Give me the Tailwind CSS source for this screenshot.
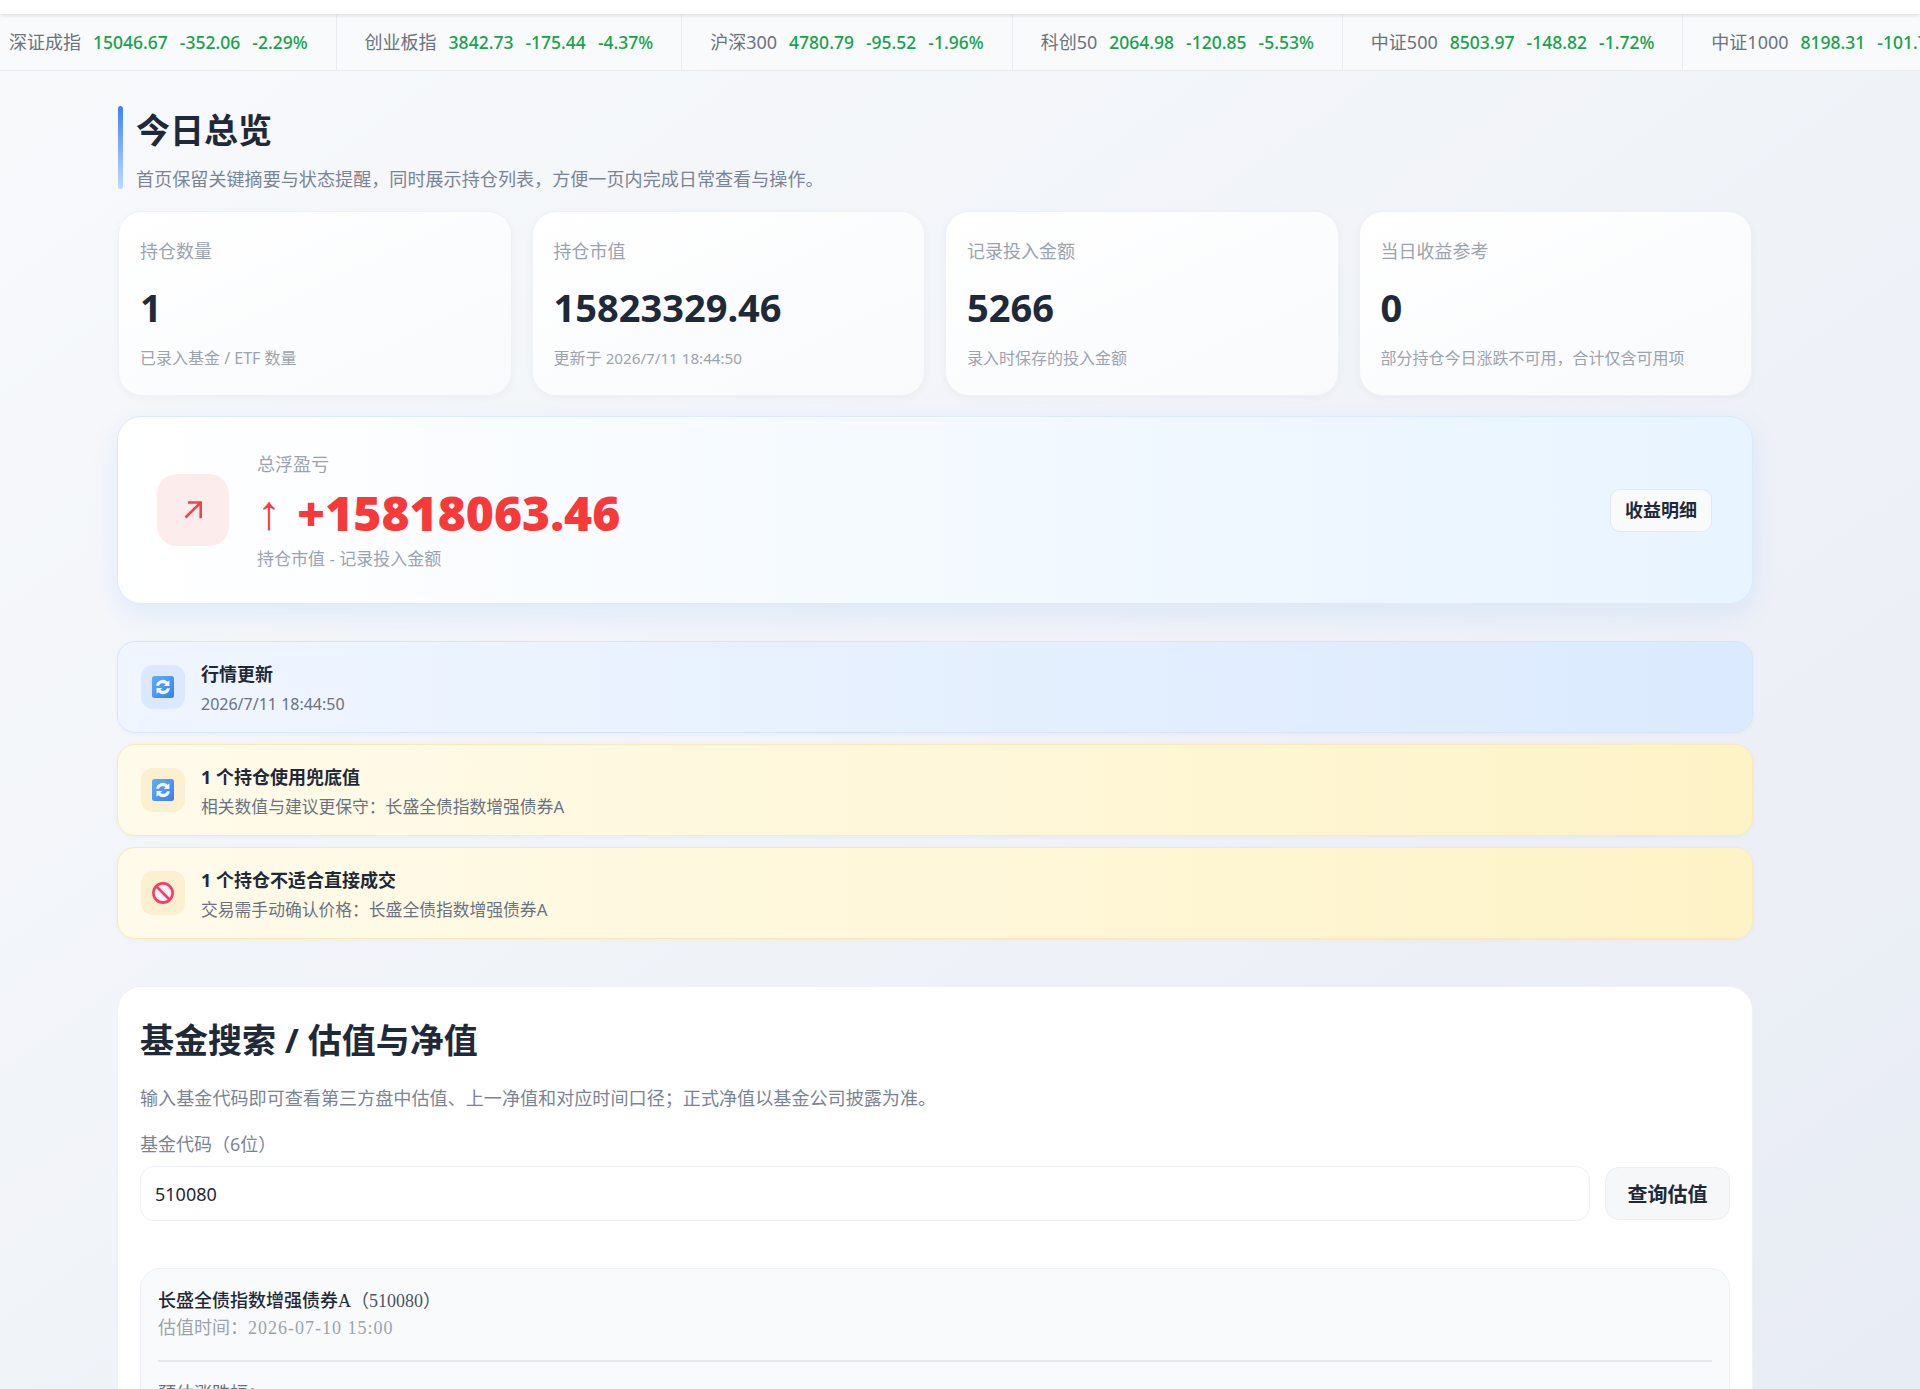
<!doctype html>
<html lang="zh-CN">
<head>
<meta charset="utf-8">
<script src="https://cdn.jsdelivr.net/npm/@tailwindcss/browser@4"></script>
<title>今日总览</title>
</head>
<body class="h-[1389px] overflow-hidden bg-gradient-to-br from-[#f8fafc] to-[#e8ecf4] font-['Noto_Sans','Noto_Sans_CJK_SC',sans-serif] text-[#1f2937]">
<div class="relative z-10 h-[14px] bg-white shadow-[0_1px_4px_rgba(0,0,0,0.14)]"></div>
<div class="flex h-[57px] items-center overflow-hidden whitespace-nowrap border-b border-[#e8ebf0] bg-[#f9fafb] pt-[1px] text-[17.5px]">
  <div class="flex h-full shrink-0 items-center gap-3 border-r border-[#e8ebf0] pl-[9px] pr-[28px]"><span class="text-[18px] text-[#6b7280]">深证成指</span><span class="font-medium text-[#16a34a]">15046.67</span><span class="font-medium text-[#16a34a]">-352.06</span><span class="font-medium text-[#16a34a]">-2.29%</span></div>
  <div class="flex h-full shrink-0 items-center gap-3 border-r border-[#e8ebf0] px-[28px]"><span class="text-[18px] text-[#6b7280]">创业板指</span><span class="font-medium text-[#16a34a]">3842.73</span><span class="font-medium text-[#16a34a]">-175.44</span><span class="font-medium text-[#16a34a]">-4.37%</span></div>
  <div class="flex h-full shrink-0 items-center gap-3 border-r border-[#e8ebf0] px-[28px]"><span class="text-[18px] text-[#6b7280]">沪深300</span><span class="font-medium text-[#16a34a]">4780.79</span><span class="font-medium text-[#16a34a]">-95.52</span><span class="font-medium text-[#16a34a]">-1.96%</span></div>
  <div class="flex h-full shrink-0 items-center gap-3 border-r border-[#e8ebf0] px-[28px]"><span class="text-[18px] text-[#6b7280]">科创50</span><span class="font-medium text-[#16a34a]">2064.98</span><span class="font-medium text-[#16a34a]">-120.85</span><span class="font-medium text-[#16a34a]">-5.53%</span></div>
  <div class="flex h-full shrink-0 items-center gap-3 border-r border-[#e8ebf0] px-[28px]"><span class="text-[18px] text-[#6b7280]">中证500</span><span class="font-medium text-[#16a34a]">8503.97</span><span class="font-medium text-[#16a34a]">-148.82</span><span class="font-medium text-[#16a34a]">-1.72%</span></div>
  <div class="flex h-full shrink-0 items-center gap-3 px-[28px]"><span class="text-[18px] text-[#6b7280]">中证1000</span><span class="font-medium text-[#16a34a]">8198.31</span><span class="font-medium text-[#16a34a]">-101.77</span><span class="font-medium text-[#16a34a]">-1.23%</span></div>
</div>
<main class="ml-[117px] w-[1636px] pt-[35px]">
  <div class="relative ml-[1px] h-[83px] pl-[18px]">
    <div class="absolute left-0 top-0 h-full w-[5px] rounded-full bg-gradient-to-b from-[#3b82f6] to-[#bfdbfe]"></div>
    <h1 class="text-[34px] font-bold leading-[48px]">今日总览</h1>
    <p class="mt-[11px] text-[18.1px] leading-[28px] text-[#7b8494]">首页保留关键摘要与状态提醒，同时展示持仓列表，方便一页内完成日常查看与操作。</p>
  </div>
  <div class="ml-[1px] mt-[22px] grid w-[1634px] grid-cols-4 gap-[20px]">
    <div class="h-[185px] rounded-[24px] border border-[#eef1f6] bg-gradient-to-br from-white to-[#f8fafc] px-[21px] pt-[25px] shadow-[0_2px_8px_rgba(15,23,42,0.04)]"><p class="text-[18px] leading-[28px] text-[#9ca3af]">持仓数量</p><p class="mt-[16px] text-[38px] font-bold leading-[52px]">1</p><p class="mt-[13px] text-[16px] leading-[24px] text-[#9ca3af]">已录入基金 / ETF 数量</p></div>
    <div class="h-[185px] rounded-[24px] border border-[#eef1f6] bg-gradient-to-br from-white to-[#f8fafc] px-[21px] pt-[25px] shadow-[0_2px_8px_rgba(15,23,42,0.04)]"><p class="text-[18px] leading-[28px] text-[#9ca3af]">持仓市值</p><p class="mt-[16px] text-[38px] font-bold leading-[52px]">15823329.46</p><p class="mt-[13px] text-[16px] leading-[24px] text-[#9ca3af]">更新于 <span class="text-[15.2px]">2026/7/11 18:44:50</span></p></div>
    <div class="h-[185px] rounded-[24px] border border-[#eef1f6] bg-gradient-to-br from-white to-[#f8fafc] px-[21px] pt-[25px] shadow-[0_2px_8px_rgba(15,23,42,0.04)]"><p class="text-[18px] leading-[28px] text-[#9ca3af]">记录投入金额</p><p class="mt-[16px] text-[38px] font-bold leading-[52px]">5266</p><p class="mt-[13px] text-[16px] leading-[24px] text-[#9ca3af]">录入时保存的投入金额</p></div>
    <div class="h-[185px] rounded-[24px] border border-[#eef1f6] bg-gradient-to-br from-white to-[#f8fafc] px-[21px] pt-[25px] shadow-[0_2px_8px_rgba(15,23,42,0.04)]"><p class="text-[18px] leading-[28px] text-[#9ca3af]">当日收益参考</p><p class="mt-[16px] text-[38px] font-bold leading-[52px]">0</p><p class="mt-[13px] text-[16px] leading-[24px] text-[#9ca3af]">部分持仓今日涨跌不可用，合计仅含可用项</p></div>
  </div>
  <section class="mt-[20px] flex h-[188px] items-center justify-between rounded-[24px] border border-[#dbeafe] bg-gradient-to-r from-white to-[#e8f4ff] pl-[39px] pr-[40px] shadow-[0_10px_28px_rgba(59,130,246,0.10)]">
    <div class="flex items-center gap-[28px]">
      <div class="flex h-[72px] w-[72px] items-center justify-center rounded-[20px] bg-[#fdecec]">
        <svg width="18" height="18" viewBox="0 0 18 18" fill="none" stroke="#ef4444" stroke-width="2.6"><path d="M1.5 16.5L16 2.2M4 1.5h12.7v15.7"/></svg>
      </div>
      <div class="pt-[2px]">
        <p class="text-[18px] leading-[28px] text-[#9ca3af]">总浮盈亏</p>
        <p class="mt-[7px] text-[48px] font-black leading-[56px] text-[#f63a3a]"><span class="inline-block w-[40px] -translate-y-[2px] font-['Liberation_Sans'] font-normal">↑</span>+15818063.46</p>
        <p class="mt-[2px] text-[17px] leading-[28px] text-[#9ca3af]">持仓市值 - 记录投入金额</p>
      </div>
    </div>
    <button class="h-[43px] w-[102px] rounded-[10px] border border-[#e5e7eb] bg-[#f9fafb] pt-[1px] text-[18px] font-bold">收益明细</button>
  </section>
  <div class="mt-[37px] flex flex-col gap-[11px]">
    <div class="flex h-[92px] items-center gap-[16px] rounded-[18px] border border-[#d5e5fd] bg-gradient-to-r from-[#f0f6ff] to-[#dbeafe] pl-[23px] shadow-[0_1px_4px_rgba(15,23,42,0.04)]">
      <div class="flex h-[44px] w-[44px] items-center justify-center rounded-[12px] bg-[#dbe8fd]">
        <svg width="24" height="24" viewBox="0 0 24 24"><defs><linearGradient id="blueA" x1="0" y1="0" x2="1" y2="1"><stop offset="0" stop-color="#5eaefc"/><stop offset="1" stop-color="#3f7fe0"/></linearGradient></defs><rect x="1" y="1" width="22" height="22" rx="2.5" fill="url(#blueA)"/><path transform="translate(-1.8 -1.8) scale(1.15)" d="M6 11a6 6 0 0 1 10-3.6l1.6-1.2v5h-5l1.7-1.5A3.6 3.6 0 0 0 8.5 11zM18 13a6 6 0 0 1-10 3.6l-1.6 1.2v-5h5l-1.7 1.5A3.6 3.6 0 0 0 15.5 13z" fill="#eef6ff"/></svg>
      </div>
      <div class="pt-[4px]"><p class="text-[18px] font-bold leading-[28px]">行情更新</p><p class="mt-[2px] text-[16px] leading-[28px] text-[#6b7280]">2026/7/11 18:44:50</p></div>
    </div>
    <div class="flex h-[92px] items-center gap-[16px] rounded-[18px] border border-[#fde9b8] bg-gradient-to-r from-[#fffbeb] to-[#fef3c7] pl-[23px] shadow-[0_1px_4px_rgba(15,23,42,0.04)]">
      <div class="flex h-[44px] w-[44px] items-center justify-center rounded-[12px] bg-[#fdf0d0]">
        <svg width="24" height="24" viewBox="0 0 24 24"><defs><linearGradient id="blueB" x1="0" y1="0" x2="1" y2="1"><stop offset="0" stop-color="#5eaefc"/><stop offset="1" stop-color="#3f7fe0"/></linearGradient></defs><rect x="1" y="1" width="22" height="22" rx="2.5" fill="url(#blueB)"/><path transform="translate(-1.8 -1.8) scale(1.15)" d="M6 11a6 6 0 0 1 10-3.6l1.6-1.2v5h-5l1.7-1.5A3.6 3.6 0 0 0 8.5 11zM18 13a6 6 0 0 1-10 3.6l-1.6 1.2v-5h5l-1.7 1.5A3.6 3.6 0 0 0 15.5 13z" fill="#eef6ff"/></svg>
      </div>
      <div class="pt-[4px]"><p class="text-[18px] font-bold leading-[28px]">1 个持仓使用兜底值</p><p class="mt-[2px] text-[16.8px] leading-[28px] text-[#6b7280]">相关数值与建议更保守：长盛全债指数增强债券A</p></div>
    </div>
    <div class="flex h-[92px] items-center gap-[16px] rounded-[18px] border border-[#fde9b8] bg-gradient-to-r from-[#fffbeb] to-[#fef3c7] pl-[23px] shadow-[0_1px_4px_rgba(15,23,42,0.04)]">
      <div class="flex h-[44px] w-[44px] items-center justify-center rounded-[12px] bg-[#fdf0d0]">
        <svg width="24" height="24" viewBox="0 0 24 24"><circle cx="12" cy="12" r="9.6" fill="#f5f0fb" stroke="#f43f5e" stroke-width="2.6"/><path d="M5.5 5.5l13 13" stroke="#f43f5e" stroke-width="2.6"/></svg>
      </div>
      <div class="pt-[4px]"><p class="text-[18px] font-bold leading-[28px]">1 个持仓不适合直接成交</p><p class="mt-[2px] text-[16.8px] leading-[28px] text-[#6b7280]">交易需手动确认价格：长盛全债指数增强债券A</p></div>
    </div>
  </div>
  <section class="mt-[47px] rounded-[24px] border border-[#eef1f6] bg-white px-[22px] pb-[40px] pt-[27px]">
    <h2 class="text-[34px] font-bold leading-[52px]">基金搜索 / 估值与净值</h2>
    <p class="mt-[18px] text-[18.1px] leading-[28px] text-[#7b8494]">输入基金代码即可查看第三方盘中估值、上一净值和对应时间口径；正式净值以基金公司披露为准。</p>
    <p class="mt-[18px] text-[18px] leading-[28px] text-[#7b8494]">基金代码（6位）</p>
    <div class="mt-[8px] flex items-center gap-[15px]">
      <div class="flex h-[55px] flex-1 items-center rounded-[14px] border border-[#eef0f3] bg-white px-[14px] pt-[2px] text-[18px]">510080</div>
      <button class="h-[53px] w-[125px] rounded-[14px] border border-[#eceef2] bg-[#f6f7f9] pt-[2px] text-[20px] font-bold">查询估值</button>
    </div>
    <div class="mt-[47px] rounded-[20px] border border-[#eef0f3] bg-[#f9fafb] px-[17px] pt-[18px] font-['Liberation_Serif','Noto_Sans_CJK_SC',serif] text-[18px]">
      <p class="font-medium leading-[28px]">长盛全债指数增强债券A<span class="font-normal text-[#4b5563]">（510080）</span></p>
      <p class="leading-[26px] text-[#9ca3af]">估值时间：<span class="tracking-[1px]">2026-07-10 15:00</span></p>
      <div class="mt-[19px] border-t-2 border-[#e5e7eb]"></div>
      <p class="mt-[20px] leading-[24px] text-[#6b7280]">预估涨跌幅：<span class="ml-[5px] font-['Liberation_Sans'] text-[#ef4444]">↑</span></p>
    </div>
  </section>
</main>
</body>
</html>
